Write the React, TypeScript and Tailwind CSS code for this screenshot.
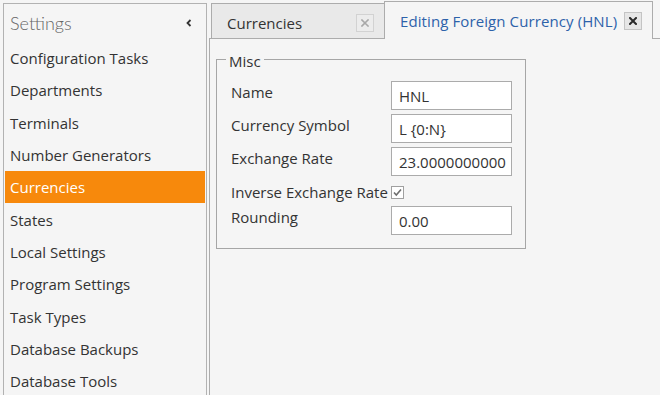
import React from "react";

const items = [
  "Configuration Tasks",
  "Departments",
  "Terminals",
  "Number Generators",
  "Currencies",
  "States",
  "Local Settings",
  "Program Settings",
  "Task Types",
  "Database Backups",
  "Database Tools",
];

function CloseIcon({ active }: { active: boolean }) {
  return (
    <div
      className={
        active
          ? "flex h-[18px] w-[18px] shrink-0 items-center justify-center border border-[#c4c4c4] bg-[#e6e6e6]"
          : "flex h-[18px] w-[18px] shrink-0 items-center justify-center border border-[#d2d2d2] bg-[#ececec]"
      }
    >
      <svg width="8" height="8" viewBox="0 0 8 8">
        <path
          d="M1 1 L7 7 M7 1 L1 7"
          stroke={active ? "#2a2a2a" : "#a8a8a8"}
          strokeWidth={active ? 2 : 1.6}
          strokeLinecap="square"
        />
      </svg>
    </div>
  );
}

function Field({ label, value }: { label: string; value: string }) {
  return (
    <div className="flex h-[29px] items-start">
      <div className="w-[160px] shrink-0 pt-[1px] leading-[20px]">{label}</div>
      <input
        readOnly
        defaultValue={value}
        className="h-[29px] w-[121px] border border-[#ababab] bg-white pl-[7px] pr-0 pt-[1px] text-[15px] leading-[20px] text-[#333] outline-none"
      />
    </div>
  );
}

export default function App() {
  return (
    <div className="flex h-[395px] w-[660px] overflow-hidden bg-[#f5f5f5] font-['Open_Sans',sans-serif] text-[15px] leading-[20px] text-[#333]">
      {/* Sidebar */}
      <div className="ml-[3px] mt-[3px] flex w-[204px] shrink-0 flex-col border-l border-r border-t border-[#b2b2b2]">
        <div className="flex h-[38px] shrink-0 items-center justify-between pl-[6px] pr-[14px]">
          <span className="font-['Lato',sans-serif] text-[18px] font-light leading-[24px] text-[#666]">Settings</span>
          <svg width="6" height="8" viewBox="0 0 6 8">
            <path d="M4.5 1 L1.5 4 L4.5 7" fill="none" stroke="#333" strokeWidth="1.8" />
          </svg>
        </div>
        <div className="flex flex-col">
          {items.map((it) => (
            <div
              key={it}
              className={
                it === "Currencies"
                  ? "mx-[1px] flex h-[32.3px] shrink-0 items-center bg-[#f7890c] pl-[5px] text-white"
                  : "mx-[1px] flex h-[32.3px] shrink-0 items-center pl-[5px]"
              }
            >
              {it}
            </div>
          ))}
        </div>
      </div>

      {/* Main */}
      <div className="ml-[2px] flex min-w-0 flex-1 flex-col">
        <div className="flex h-[38px] shrink-0 items-end">
          <div className="ml-[2px] flex h-[35px] w-[173px] shrink-0 items-center border-l border-t border-[#acacac] bg-[#e9e9e9] pl-[15px] pr-[10px] pt-[3px]">
            <span>Currencies</span>
            <div className="ml-auto">
              <CloseIcon active={false} />
            </div>
          </div>
          <div className="relative z-10 -mb-px flex h-[38px] w-[269px] shrink-0 items-center border-l border-r border-t border-[#acacac] bg-[#f5f5f5] pl-[15px] pr-[10px]">
            <span className="whitespace-nowrap tracking-[0.1px] text-[#2d62aa]">Editing Foreign Currency (HNL)</span>
            <div className="ml-auto">
              <CloseIcon active={true} />
            </div>
          </div>
        </div>

        <div className="flex-1 border-l border-t border-[#acacac]">
          <fieldset className="ml-[6px] mt-[11px] w-[310px] border border-[#a6a6a6] px-[9px] pb-[13px]">
            <legend className="px-[3px] pt-[3px] leading-[16px]">Misc</legend>
            <div className="mt-[12px] flex flex-col gap-[4px] pl-[5px]">
              <Field label="Name" value="HNL" />
              <Field label="Currency Symbol" value="L {0:N}" />
              <Field label="Exchange Rate" value="23.0000000000" />
              <div className="flex h-[22px] items-center pt-[2px]">
                <div className="w-[160px] shrink-0 leading-[20px]">Inverse Exchange Rate</div>
                <div className="flex h-[13px] w-[13px] items-center justify-center border border-[#a0a0a0] bg-white">
                  <svg width="11" height="11" viewBox="0 0 11 11">
                    <path d="M2 5.5 L4.3 8 L9 2.5" fill="none" stroke="#6e6e6e" strokeWidth="1.6" />
                  </svg>
                </div>
              </div>
              <Field label="Rounding" value="0.00" />
            </div>
          </fieldset>
        </div>
      </div>
    </div>
  );
}
